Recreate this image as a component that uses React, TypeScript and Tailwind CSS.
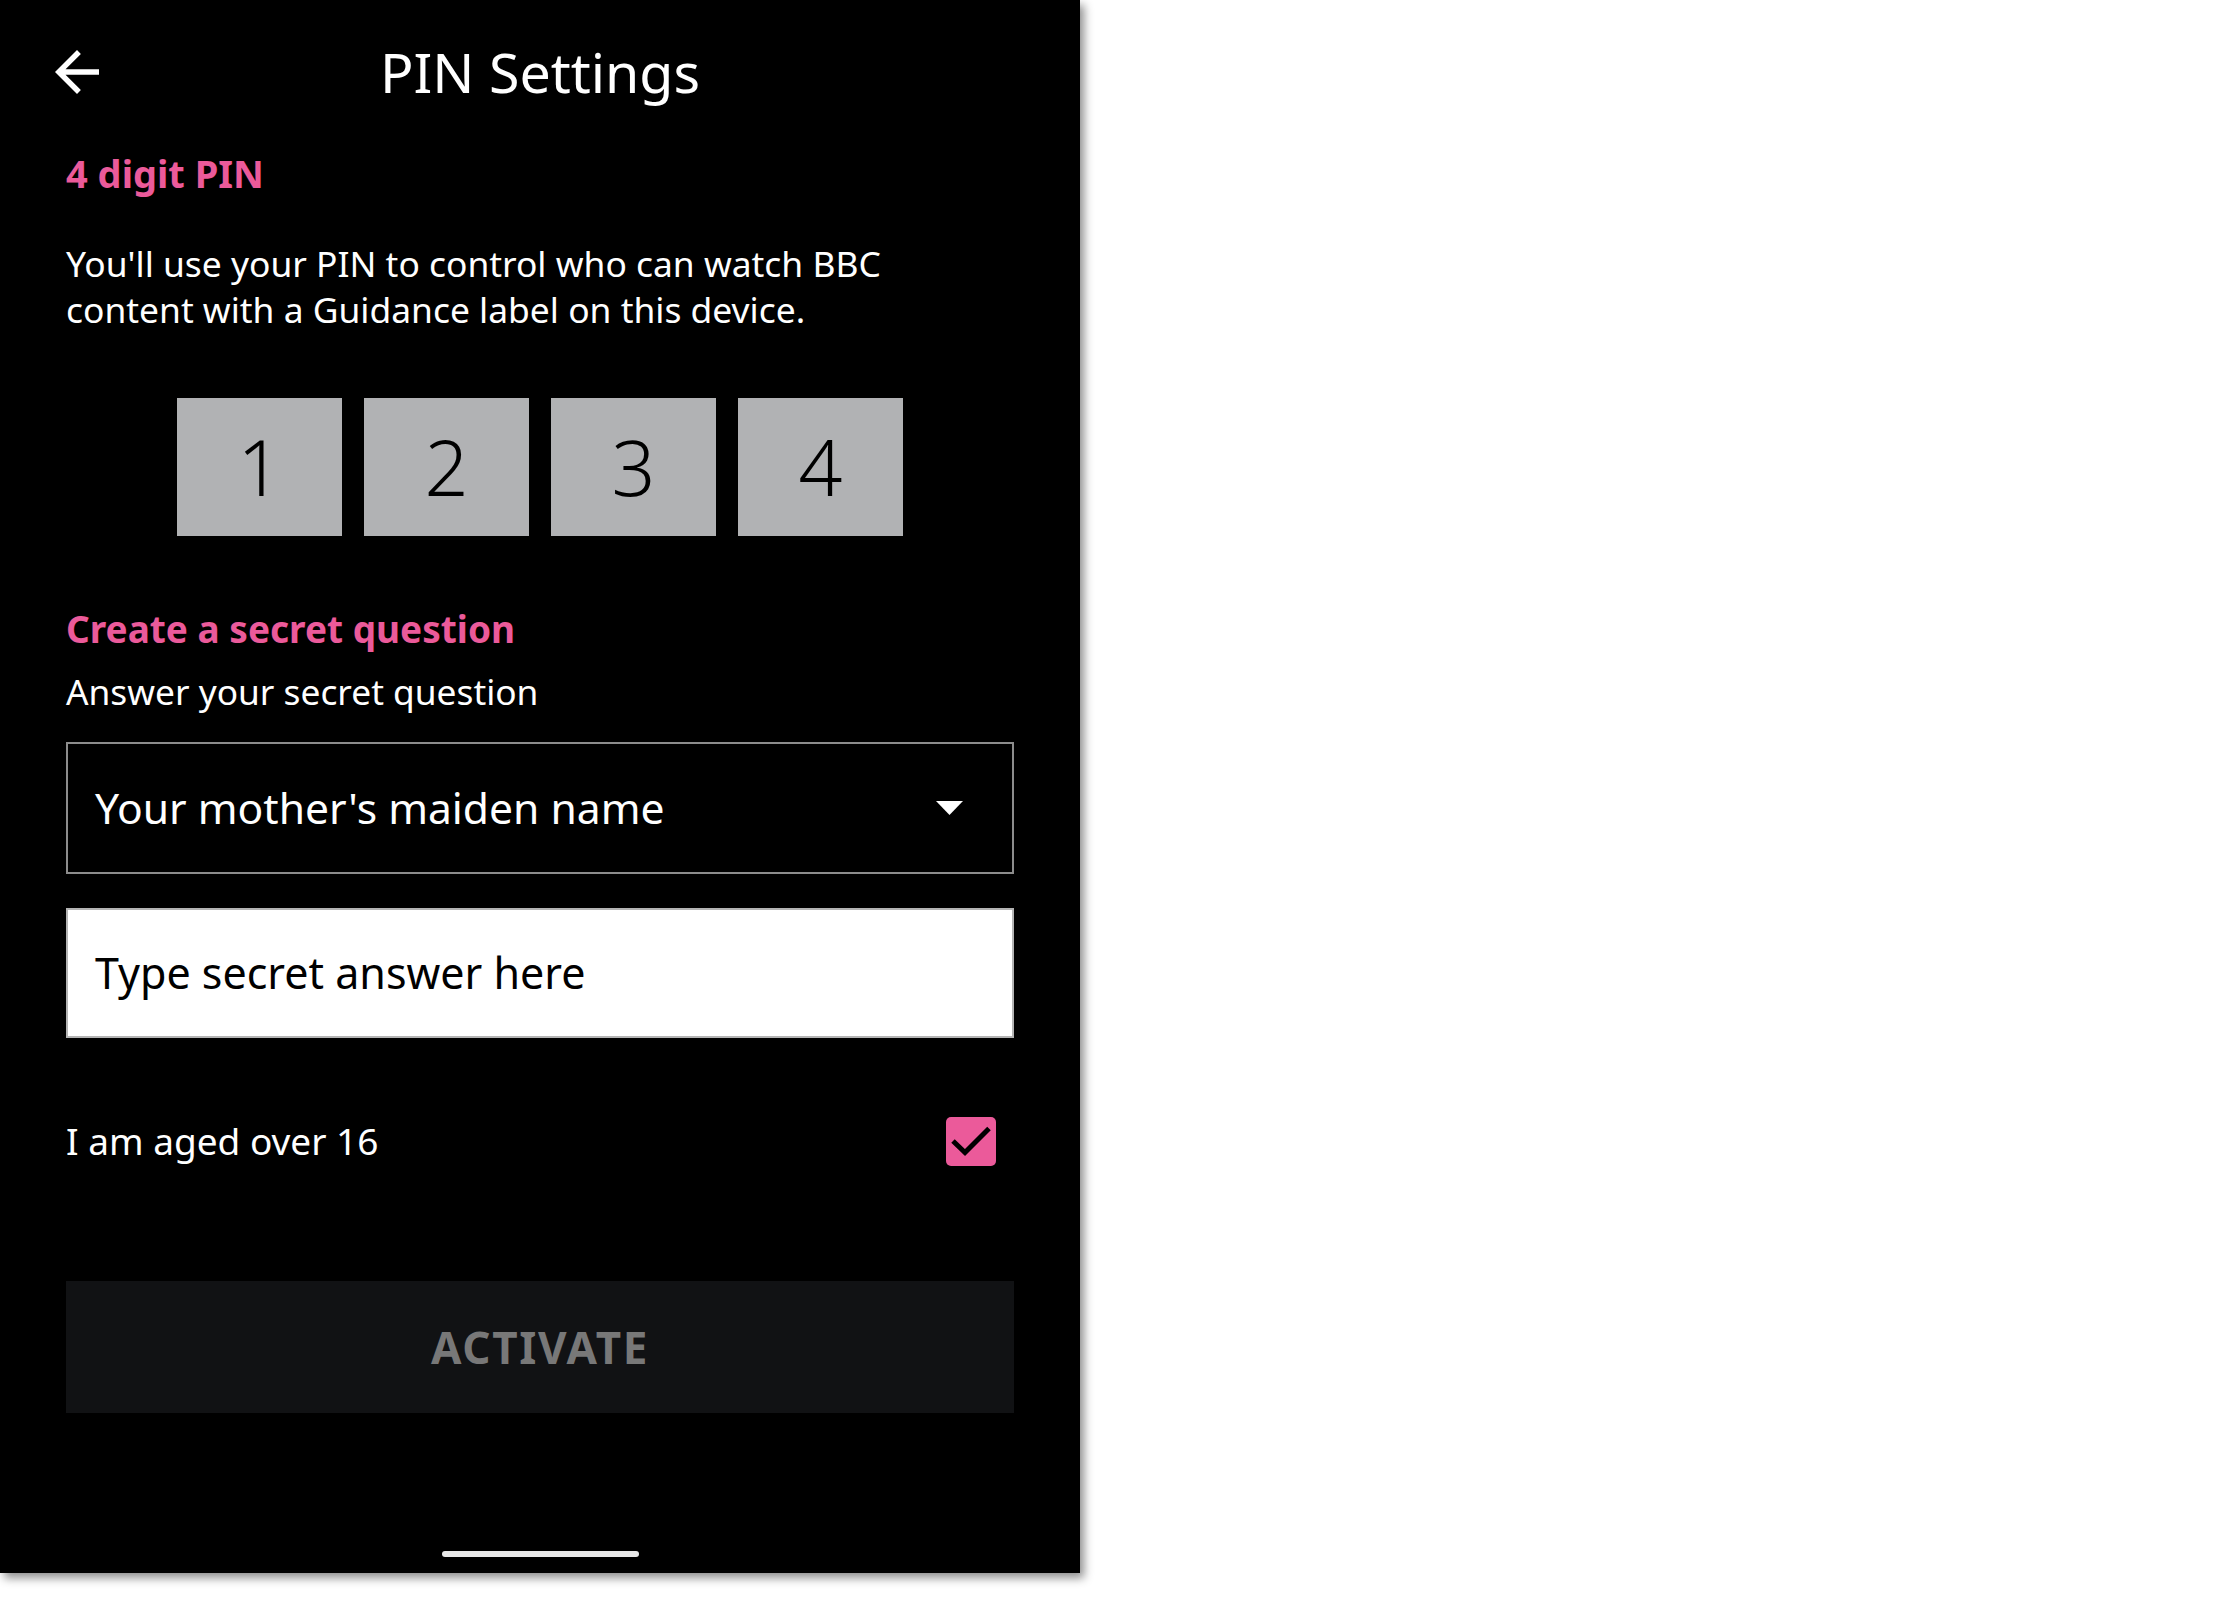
import React from 'react'

const pink = 'text-[#eb5a9a]'

const digits = ['1', '2', '3', '4']

function BackArrow() {
  return (
    <svg width="66" height="66" viewBox="0 0 24 24" fill="white">
      <path d="M20 11H7.83l5.59-5.59L12 4l-8 8 8 8 1.41-1.41L7.83 13H20v-2z" />
    </svg>
  )
}

function CheckBox() {
  return (
    <div className="w-[50px] h-[49px] rounded-[5px] bg-[#eb5a9a]">
      <svg width="50" height="49" viewBox="0 0 50 49">
        <path d="M7 24 L19 35.5 L43 11.5" fill="none" stroke="black" strokeWidth="5" />
      </svg>
    </div>
  )
}

export default function App() {
  return (
    <div className="min-h-screen bg-white" style={{ fontFamily: '"Noto Sans", sans-serif' }}>
      <div className="w-[1080px] h-[1573px] bg-black flex flex-col shadow-[4px_5px_9px_rgba(0,0,0,0.45)]">
        {/* header */}
        <div className="h-[144px] grid grid-cols-[1fr_auto_1fr] items-center">
          <div className="pl-[44px] flex items-center">
            <BackArrow />
          </div>
          <h1 className="text-white text-[55.5px] leading-[64px] font-normal">PIN Settings</h1>
          <div></div>
        </div>

        <div className="px-[66px] flex flex-col flex-1">
          <h2 className={`${pink} font-bold text-[38px] leading-[52px] mt-[3px]`}>4 digit PIN</h2>
          <p className="text-white text-[35.4px] leading-[46px] mt-[41px]">
            You'll use your PIN to control who can watch BBC
            <br />
            content with a Guidance label on this device.
          </p>

          <div className="mt-[66px] flex justify-center gap-[22px]">
            {digits.map(d => (
              <div
                key={d}
                className="w-[165px] h-[138px] bg-[#b1b2b4] flex items-center justify-center text-black text-[77px] font-light"
              >
                {d}
              </div>
            ))}
          </div>

          <h2 className={`${pink} font-bold text-[37px] leading-[50px] mt-[68px]`}>Create a secret question</h2>
          <p className="text-white text-[35.3px] leading-[48px] mt-[13px]">Answer your secret question</p>

          <div className="mt-[27px] h-[132px] border-2 border-[#8c8c8c] flex items-center justify-between pl-[27px] pr-[49px]">
            <span className="text-white text-[42.6px]">Your mother's maiden name</span>
            <svg width="27" height="14" viewBox="0 0 27 14">
              <path d="M0 0 H27 L13.5 14 Z" fill="white" />
            </svg>
          </div>

          <div className="mt-[34px] h-[130px] border-2 border-[#b4b4b4] bg-white flex items-center pl-[27px]">
            <span className="text-black text-[43px]">Type secret answer here</span>
          </div>

          <div className="mt-[73px] h-[60px] flex items-center justify-between pr-[18px]">
            <span className="text-white text-[37px]">I am aged over 16</span>
            <CheckBox />
          </div>

          <button className="mt-[110px] h-[132px] w-full bg-[#111214] flex items-center justify-center">
            <span className="text-[#787878] text-[44px] font-bold tracking-[1.7px]">ACTIVATE</span>
          </button>

          <div className="flex-1"></div>
          <div className="flex justify-center mb-[16px]">
            <div className="w-[197px] h-[6px] rounded-full bg-[#e8e8e8]"></div>
          </div>
        </div>
      </div>
    </div>
  )
}
